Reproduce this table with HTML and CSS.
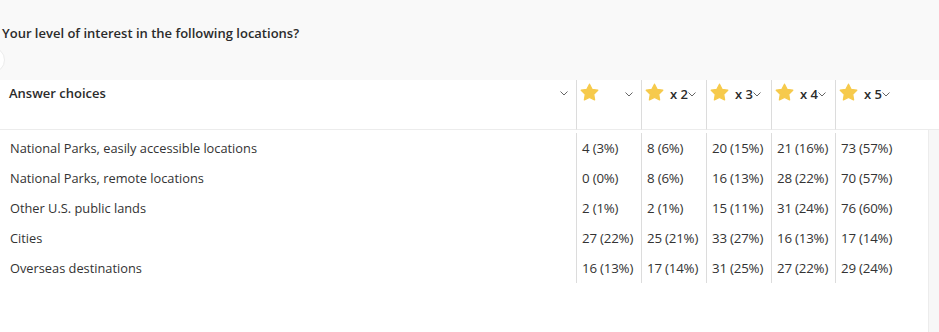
FILE: index.html
```html
<!DOCTYPE html>
<html>
<head>
<meta charset="utf-8">
<link rel="stylesheet" href="styles.css">
</head>
<body>
<div class="top">
  <h1 class="title">Your level of interest in the following locations?</h1>
  <span class="knob"></span>
</div>
<div class="head">
  <div class="hcell first"><span class="hlabel">Answer choices</span><svg class="chev" viewBox="0 0 8 5"><path d="M0.5 0.5 L4 4 L7.5 0.5"/></svg></div>
  <div class="hcell c1"><svg class="star" viewBox="0 0 24 24"><path d="M12 1.5L15.29 7.97 22.46 9.1 17.33 14.23 18.47 21.4 12 18.1 5.53 21.4 6.67 14.23 1.54 9.1 8.71 7.97z"/></svg><span class="mult"></span><svg class="chev" viewBox="0 0 8 5"><path d="M0.5 0.5 L4 4 L7.5 0.5"/></svg></div>
  <div class="hcell c2"><svg class="star" viewBox="0 0 24 24"><path d="M12 1.5L15.29 7.97 22.46 9.1 17.33 14.23 18.47 21.4 12 18.1 5.53 21.4 6.67 14.23 1.54 9.1 8.71 7.97z"/></svg><span class="mult">x 2</span><svg class="chev" viewBox="0 0 8 5"><path d="M0.5 0.5 L4 4 L7.5 0.5"/></svg></div>
  <div class="hcell c3"><svg class="star" viewBox="0 0 24 24"><path d="M12 1.5L15.29 7.97 22.46 9.1 17.33 14.23 18.47 21.4 12 18.1 5.53 21.4 6.67 14.23 1.54 9.1 8.71 7.97z"/></svg><span class="mult">x 3</span><svg class="chev" viewBox="0 0 8 5"><path d="M0.5 0.5 L4 4 L7.5 0.5"/></svg></div>
  <div class="hcell c4"><svg class="star" viewBox="0 0 24 24"><path d="M12 1.5L15.29 7.97 22.46 9.1 17.33 14.23 18.47 21.4 12 18.1 5.53 21.4 6.67 14.23 1.54 9.1 8.71 7.97z"/></svg><span class="mult">x 4</span><svg class="chev" viewBox="0 0 8 5"><path d="M0.5 0.5 L4 4 L7.5 0.5"/></svg></div>
  <div class="hcell c5"><svg class="star" viewBox="0 0 24 24"><path d="M12 1.5L15.29 7.97 22.46 9.1 17.33 14.23 18.47 21.4 12 18.1 5.53 21.4 6.67 14.23 1.54 9.1 8.71 7.97z"/></svg><span class="mult">x 5</span><svg class="chev" viewBox="0 0 8 5"><path d="M0.5 0.5 L4 4 L7.5 0.5"/></svg></div>
</div>
<div class="bodywrap">
  <div class="grid">
    <div class="row"><div class="cell first">National Parks, easily accessible locations</div><div class="cell c1">4 (3%)</div><div class="cell c2">8 (6%)</div><div class="cell c3">20 (15%)</div><div class="cell c4">21 (16%)</div><div class="cell c5">73 (57%)</div></div>
    <div class="row"><div class="cell first">National Parks, remote locations</div><div class="cell c1">0 (0%)</div><div class="cell c2">8 (6%)</div><div class="cell c3">16 (13%)</div><div class="cell c4">28 (22%)</div><div class="cell c5">70 (57%)</div></div>
    <div class="row"><div class="cell first">Other U.S. public lands</div><div class="cell c1">2 (1%)</div><div class="cell c2">2 (1%)</div><div class="cell c3">15 (11%)</div><div class="cell c4">31 (24%)</div><div class="cell c5">76 (60%)</div></div>
    <div class="row"><div class="cell first">Cities</div><div class="cell c1">27 (22%)</div><div class="cell c2">25 (21%)</div><div class="cell c3">33 (27%)</div><div class="cell c4">16 (13%)</div><div class="cell c5">17 (14%)</div></div>
    <div class="row"><div class="cell first">Overseas destinations</div><div class="cell c1">16 (13%)</div><div class="cell c2">17 (14%)</div><div class="cell c3">31 (25%)</div><div class="cell c4">27 (22%)</div><div class="cell c5">29 (24%)</div></div>
  </div>
  <div class="strip"></div>
</div>
</body>
</html>
```
FILE: styles.css
```css
html, body {
  margin: 0;
  padding: 0;
  background: #ffffff;
  font-family: "Open Sans", "Liberation Sans", sans-serif;
  color: #333333;
  overflow: hidden;
}
body {
  width: 939px;
  height: 332px;
}
.top {
  position: relative;
  height: 80px;
  background: #f9f9f9;
  overflow: hidden;
}
.title {
  margin: 0;
  padding: 24px 0 0 2px;
  font-size: 13px;
  font-weight: 600;
  line-height: 18px;
  color: #2b2b2b;
}
.knob {
  position: absolute;
  left: -21px;
  top: 47px;
  width: 24px;
  height: 24px;
  border-radius: 50%;
  background: #ffffff;
  border: 1px solid #ececec;
}
.head {
  display: flex;
  height: 50px;
  background: #ffffff;
}
.hcell {
  box-sizing: border-box;
  display: flex;
  align-items: flex-start;
  padding-top: 5px;
  height: 50px;
  border-left: 1px solid #dcdcdc;
}
.head .hcell {
  border-bottom: 1px solid #ececec;
}
.head .hcell.c5 {
  width: 104px;
}
.hcell.first {
  border-left: none;
  width: 576px;
  padding-left: 9px;
  padding-top: 4px;
}
.hlabel {
  font-size: 13px;
  font-weight: 600;
  color: #2b2b2b;
  line-height: 18px;
  margin-right: auto;
}
.chev {
  width: 8px;
  height: 5px;
  margin-top: 7px;
  fill: none;
  stroke: #666;
  stroke-width: 1;
}
.first .chev {
  margin-right: 8px;
  margin-top: 7px;
}
.star {
  width: 19px;
  height: 19px;
  fill: #f6ca4c;
  stroke: #f6ca4c;
  stroke-width: 1.6;
  stroke-linejoin: round;
  margin-left: 3px;
  margin-top: -2px;
}
.mult {
  font-size: 13px;
  font-weight: 600;
  line-height: 18px;
  color: #2b2b2b;
  margin-left: 6px;
}
.c1 .mult { flex: 1; }
.c1 .chev { margin-right: 8px; }
.c1 { width: 65px; }
.c2 { width: 65px; }
.c3 { width: 65px; }
.c4 { width: 64px; }
.c5 { width: 93px; }
.bodywrap {
  display: flex;
  height: 202px;
}
.grid {
  box-sizing: border-box;
  width: 929px;
  padding-top: 3px;
  border-right: 1px solid #ececec;
}
.strip {
  flex: 1;
  background: #f7f7f7;
}
.row {
  display: flex;
  height: 30px;
}
.cell {
  box-sizing: border-box;
  height: 30px;
  font-size: 13.3px;
  line-height: 30px;
  padding-left: 5px;
  border-left: 1px solid #dcdcdc;
  white-space: nowrap;
  letter-spacing: -0.2px;
}
.cell.first {
  border-left: none;
  width: 576px;
  padding-left: 10px;
  font-size: 12.8px;
  letter-spacing: 0;
}
.row .cell.c5 { width: 92px; }
```
